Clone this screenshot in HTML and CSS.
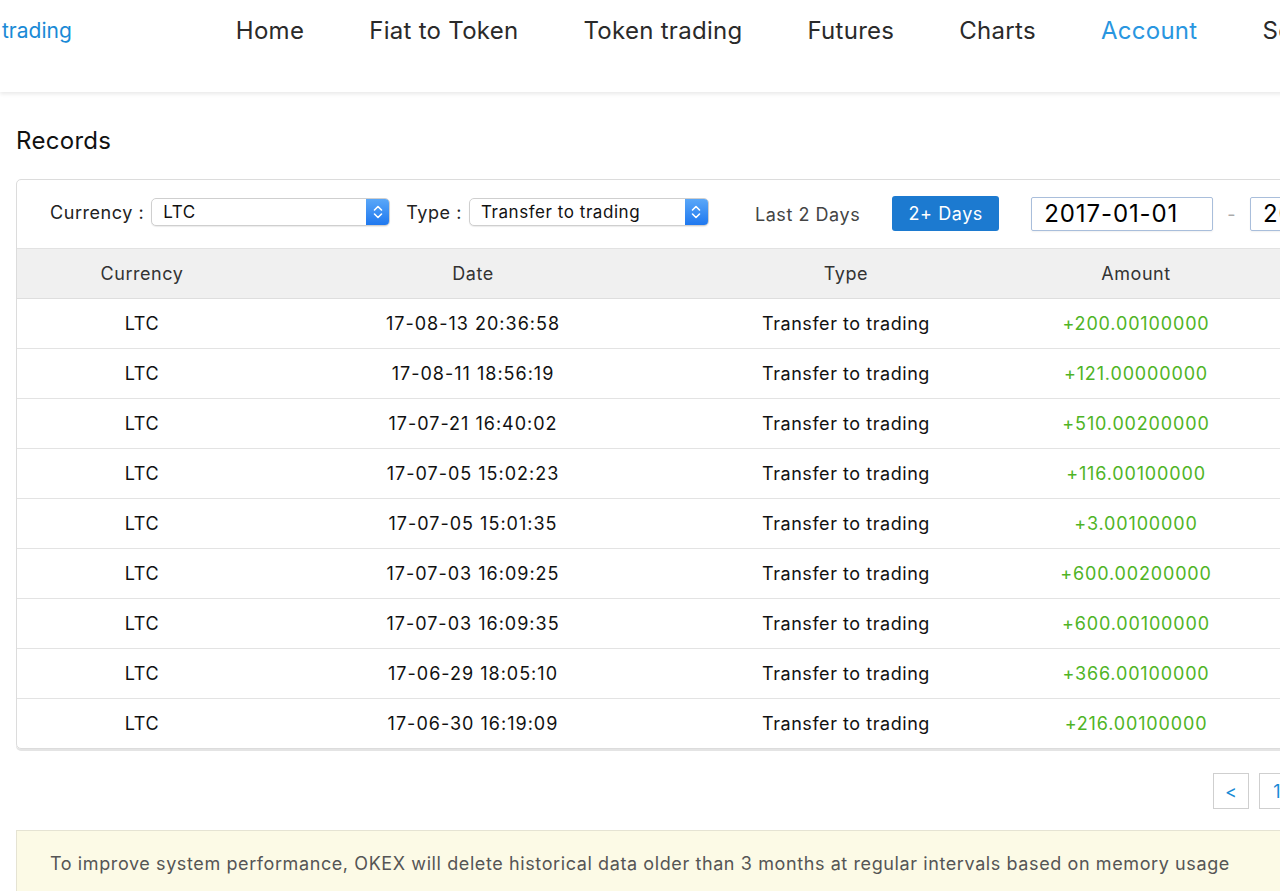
FILE: index.html
```html
<!DOCTYPE html>
<html lang="en">
<head>
<meta charset="utf-8">
<title>Records</title>
<link rel="stylesheet" href="styles.css">
</head>
<body>
<header class="topbar">
  <nav class="nav">
    <a class="logo">trading</a>
    <a class="nav-item">Home</a>
    <a class="nav-item">Fiat to Token</a>
    <a class="nav-item">Token trading</a>
    <a class="nav-item">Futures</a>
    <a class="nav-item">Charts</a>
    <a class="nav-item active">Account</a>
    <a class="nav-item">Security</a>
  </nav>
</header>
<main class="main">
  <h1 class="title">Records</h1>
  <section class="card">
    <div class="filters">
      <span class="label">Currency :</span>
      <div class="select sel-currency"><span class="sel-text">LTC</span><span class="sel-btn"><svg width="12" height="18" viewBox="0 0 12 18"><path d="M2.5 7 L6 3.5 L9.5 7 M2.5 11 L6 14.5 L9.5 11" fill="none" stroke="#fff" stroke-width="1.6" stroke-linecap="round" stroke-linejoin="round"/></svg></span></div>
      <span class="label label-type">Type :</span>
      <div class="select sel-type"><span class="sel-text">Transfer to trading</span><span class="sel-btn"><svg width="12" height="18" viewBox="0 0 12 18"><path d="M2.5 7 L6 3.5 L9.5 7 M2.5 11 L6 14.5 L9.5 11" fill="none" stroke="#fff" stroke-width="1.6" stroke-linecap="round" stroke-linejoin="round"/></svg></span></div>
      <span class="range">Last 2 Days</span>
      <button class="btn-days">2+ Days</button>
      <div class="date-input">2017-01-01</div>
      <span class="dash">-</span>
      <div class="date-input">2017-08-14</div>
    </div>
    <table class="records">
      <colgroup>
        <col class="c1"><col class="c2"><col class="c3"><col class="c4"><col class="c5">
      </colgroup>
      <thead>
        <tr><th>Currency</th><th>Date</th><th>Type</th><th>Amount</th><th>Status</th></tr>
      </thead>
      <tbody>
        <tr><td>LTC</td><td class="date">17-08-13 20:36:58</td><td>Transfer to trading</td><td class="amt">+200.00100000</td><td></td></tr>
        <tr><td>LTC</td><td class="date">17-08-11 18:56:19</td><td>Transfer to trading</td><td class="amt">+121.00000000</td><td></td></tr>
        <tr><td>LTC</td><td class="date">17-07-21 16:40:02</td><td>Transfer to trading</td><td class="amt">+510.00200000</td><td></td></tr>
        <tr><td>LTC</td><td class="date">17-07-05 15:02:23</td><td>Transfer to trading</td><td class="amt">+116.00100000</td><td></td></tr>
        <tr><td>LTC</td><td class="date">17-07-05 15:01:35</td><td>Transfer to trading</td><td class="amt">+3.00100000</td><td></td></tr>
        <tr><td>LTC</td><td class="date">17-07-03 16:09:25</td><td>Transfer to trading</td><td class="amt">+600.00200000</td><td></td></tr>
        <tr><td>LTC</td><td class="date">17-07-03 16:09:35</td><td>Transfer to trading</td><td class="amt">+600.00100000</td><td></td></tr>
        <tr><td>LTC</td><td class="date">17-06-29 18:05:10</td><td>Transfer to trading</td><td class="amt">+366.00100000</td><td></td></tr>
        <tr><td>LTC</td><td class="date">17-06-30 16:19:09</td><td>Transfer to trading</td><td class="amt">+216.00100000</td><td></td></tr>
      </tbody>
    </table>
  </section>
  <div class="pager">
    <span class="page">&lt;</span>
    <span class="page">1</span>
    <span class="page">&gt;</span>
  </div>
  <div class="notice">To improve system performance, OKEX will delete historical data older than 3 months at regular intervals based on memory usage</div>
</main>
</body>
</html>
```

FILE: styles.css
```css
html, body {
  margin: 0;
  padding: 0;
  background: #fff;
  overflow: hidden;
  height: 891px;
}
body {
  font-family: Inter, "Liberation Sans", sans-serif;
  color: #222;
  width: 1600px;
}
.topbar {
  height: 92px;
  background: #fff;
  box-shadow: 0 2px 4px rgba(0,0,0,0.09);
  position: relative;
  z-index: 1;
}
.nav {
  display: flex;
  align-items: center;
  height: 60px;
  padding-left: 2px;
  gap: 65px;
  white-space: nowrap;
}
.nav a {
  font-size: 24px;
  color: #2a2a2a;
  text-decoration: none;
  letter-spacing: 0.28px;
}
.nav .logo {
  color: #1a8ad6;
  font-size: 21px;
  letter-spacing: 0;
  margin-right: 99px;
}
.nav .active {
  color: #2996e0;
}
.main {
  padding: 0 16px;
}
.title {
  margin: 34px 0 23px;
  font-size: 24px;
  line-height: 30px;
  font-weight: 400;
  color: #111;
  letter-spacing: 0.3px;
}
.card {
  width: 1500px;
  border: 1px solid #dcdcdc;
  border-radius: 5px;
  box-shadow: 0 2px 0 #e4e4e4;
  overflow: hidden;
}
.filters {
  display: flex;
  align-items: center;
  height: 68px;
  padding-left: 33px;
  border-bottom: 1px solid #e2e2e2;
  font-size: 18px;
  letter-spacing: 0.55px;
  color: #222;
  white-space: nowrap;
}
.label {
  margin-right: 7px;
  margin-top: -3px;
}
.label-type {
  margin-left: 16px;
  margin-right: 7px;
}
.select {
  display: flex;
  align-items: stretch;
  height: 26px;
  border: 1px solid #cfcfcf;
  border-radius: 5px;
  background: #fff;
  box-shadow: 0 1px 1px rgba(0,0,0,0.08);
  margin-top: -5px;
  overflow: hidden;
}
.sel-currency { width: 237px; }
.sel-type { width: 238px; }
.sel-text {
  flex: 1;
  font-size: 17px;
  line-height: 26px;
  padding-left: 11px;
  color: #111;
}
.sel-btn {
  width: 23px;
  display: flex;
  align-items: center;
  justify-content: center;
  background: linear-gradient(#5aa7f8, #1f78ef);
}
.range {
  margin-left: 46px;
  color: #444;
}
.btn-days {
  margin-left: 32px;
  width: 107px;
  height: 35px;
  border: none;
  border-radius: 3px;
  background: #1c7ad0;
  color: #fff;
  font-family: inherit;
  font-size: 18px;
  letter-spacing: 0.55px;
  padding: 0;
  margin-top: -2px;
}
.date-input {
  margin-left: 32px;
  width: 168px;
  height: 32px;
  border: 1px solid #a9bedb;
  border-radius: 2px;
  box-shadow: 0 1px 2px rgba(0,0,0,0.06);
  font-size: 24px;
  letter-spacing: 0.9px;
  line-height: 32px;
  padding-left: 12px;
  color: #000;
}
.dash {
  margin-left: 14px;
  color: #aaa;
}
.dash + .date-input {
  margin-left: 14px;
}
.records {
  border-collapse: collapse;
  table-layout: fixed;
  width: 100%;
  font-size: 18px;
  letter-spacing: 0.55px;
}
.c1 { width: 250px; }
.c2 { width: 412px; }
.c3 { width: 334px; }
.c4 { width: 246px; }
.records th {
  height: 49px;
  background: #f0f0f0;
  font-weight: 400;
  color: #333;
  border-bottom: 1px solid #dedede;
  padding: 0;
}
.records td {
  height: 49px;
  text-align: center;
  color: #111;
  border-bottom: 1px solid #e3e3e3;
  padding: 0;
}
.records tbody tr:last-child td {
  border-bottom: none;
}
.records .date {
  letter-spacing: 1px;
}
.records .amt {
  color: #4fb426;
  letter-spacing: 0.85px;
}
.pager {
  display: flex;
  gap: 10px;
  margin: 24px 0 0 1197px;
  height: 36px;
}
.page {
  width: 36px;
  height: 36px;
  box-sizing: border-box;
  border: 1px solid #cfcfcf;
  color: #1a8ad6;
  font-size: 18px;
  display: flex;
  align-items: center;
  justify-content: center;
}
.notice {
  margin-top: 21px;
  width: 1500px;
  height: 80px;
  box-sizing: border-box;
  background: #fcfae6;
  border: 1px solid #e5e3d3;
  padding: 21px 33px;
  font-size: 18px;
  letter-spacing: 0.6px;
  line-height: 24px;
  color: #555;
  white-space: nowrap;
}
```
